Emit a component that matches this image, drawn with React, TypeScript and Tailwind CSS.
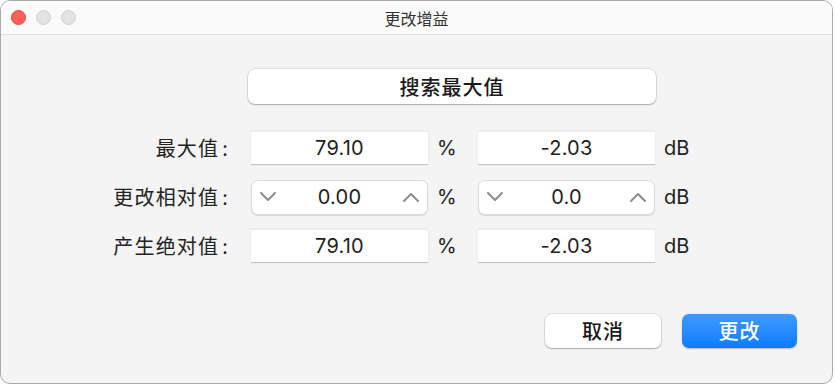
const cjk = "font-['Noto_Sans_CJK_SC',sans-serif]";
const num = "font-['Inter','Noto_Sans_CJK_SC',sans-serif]";

function Chevron({ up }: { up?: boolean }) {
  return (
    <svg width="18" height="10" viewBox="0 0 18 10" fill="none">
      <path
        d={up ? "M2 9 L9 2 L16 9" : "M2 1 L9 8 L16 1"}
        stroke="#8d8d8d"
        strokeWidth="2"
        strokeLinecap="round"
        strokeLinejoin="round"
      />
    </svg>
  );
}

function Field({ value }: { value: string }) {
  return (
    <div
      className={`w-[177px] h-[34px] bg-white border-t border-t-[#ececec] border-b border-b-[#c4c4c4] shadow-[0_0_0_0.5px_#e6e6e6] flex items-center justify-center text-[20px] tracking-[0.2px] text-[#222] ${num}`}
    >
      {value}
    </div>
  );
}

function Stepper({ value }: { value: string }) {
  return (
    <div
      className={`w-[177px] h-[35px] bg-white rounded-[7px] border border-[#dadada] shadow-[0_1px_1px_rgba(0,0,0,0.12)] flex items-center justify-between px-[7px] text-[20px] tracking-[0.2px] text-[#222] ${num}`}
    >
      <Chevron />
      <span>{value}</span>
      <Chevron up />
    </div>
  );
}

function Row({
  label,
  left,
  right,
  stepper,
}: {
  label: string;
  left: string;
  right: string;
  stepper?: boolean;
}) {
  return (
    <div className="flex items-center h-[34px]">
      <div className={`w-[230px] flex justify-end items-center pr-[2px] text-[20px] tracking-[1.2px] text-[#222] ${cjk}`}>
        <span>{label}</span>
        <span className="ml-[3px]">:</span>
      </div>
      <div className="ml-[20px]">{stepper ? <Stepper value={left} /> : <Field value={left} />}</div>
      <div className={`w-[50px] pl-[9px] text-[20px] text-[#222] ${num}`}>%</div>
      {stepper ? <Stepper value={right} /> : <Field value={right} />}
      <div className={`pl-[9px] text-[20px] text-[#222] ${num}`}>dB</div>
    </div>
  );
}

export default function App() {
  return (
    <div className="w-[835px] h-[386px] bg-white">
      <div className="w-[833px] h-[384px] rounded-[10px] border border-[#a9a9a9] bg-[#f4f4f4] overflow-hidden flex flex-col">
        <div className="relative h-[34px] shrink-0 bg-[#fafafa] border-b border-[#dedede] flex items-center justify-center">
          <div className="absolute left-[10px] top-[9px] flex gap-[10px]">
            <span className="w-[15px] h-[15px] rounded-full bg-[#fe5f57] border border-[#e2463f]" />
            <span className="w-[15px] h-[15px] rounded-full bg-[#e3e3e3] border border-[#cfcfcf]" />
            <span className="w-[15px] h-[15px] rounded-full bg-[#e3e3e3] border border-[#cfcfcf]" />
          </div>
          <span className={`text-[16px] text-[#333] ${cjk}`}>更改增益</span>
        </div>

        <div className="flex-1 flex flex-col">
          <div className="pt-[34px] pl-[247px]">
            <button
              className={`w-[408px] h-[35px] bg-white rounded-[7px] shadow-[0_0_0_0.5px_rgba(0,0,0,0.15),0_1px_1.5px_rgba(0,0,0,0.25)] text-[20px] tracking-[1px] text-[#1a1a1a] font-medium ${cjk}`}
            >
              搜索最大值
            </button>
          </div>

          <div className="mt-[27px] flex flex-col gap-[15px]">
            <Row label="最大值" left="79.10" right="-2.03" />
            <Row label="更改相对值" left="0.00" right="0.0" stepper />
            <Row label="产生绝对值" left="79.10" right="-2.03" />
          </div>

          <div className="mt-[51px] flex justify-end gap-[21px] pr-[35px]">
            <button
              className={`w-[116px] h-[34px] bg-white rounded-[7px] shadow-[0_0_0_0.5px_rgba(0,0,0,0.15),0_1px_1.5px_rgba(0,0,0,0.25)] text-[20px] tracking-[1px] text-[#1a1a1a] font-medium ${cjk}`}
            >
              取消
            </button>
            <button
              className={`w-[115px] h-[34px] rounded-[7px] bg-gradient-to-b from-[#3d9bff] to-[#0a7bff] shadow-[0_0.5px_1.5px_rgba(0,0,0,0.25)] text-[20px] tracking-[1px] text-white font-medium ${cjk}`}
            >
              更改
            </button>
          </div>
        </div>
      </div>
    </div>
  );
}
